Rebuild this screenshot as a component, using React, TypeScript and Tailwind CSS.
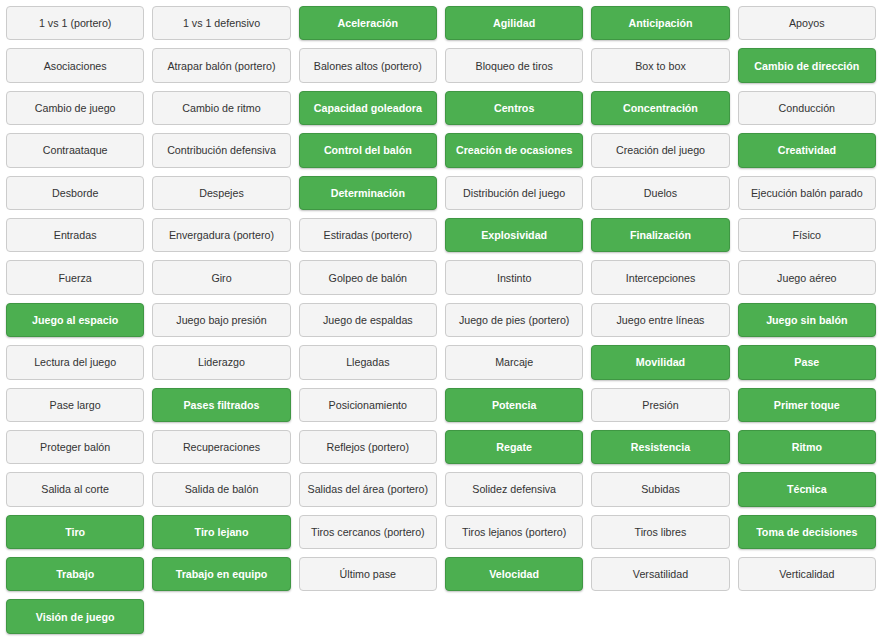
const skills: [string, boolean][] = [
  ['1 vs 1 (portero)', false], ['1 vs 1 defensivo', false], ['Aceleración', true], ['Agilidad', true], ['Anticipación', true], ['Apoyos', false],
  ['Asociaciones', false], ['Atrapar balón (portero)', false], ['Balones altos (portero)', false], ['Bloqueo de tiros', false], ['Box to box', false], ['Cambio de dirección', true],
  ['Cambio de juego', false], ['Cambio de ritmo', false], ['Capacidad goleadora', true], ['Centros', true], ['Concentración', true], ['Conducción', false],
  ['Contraataque', false], ['Contribución defensiva', false], ['Control del balón', true], ['Creación de ocasiones', true], ['Creación del juego', false], ['Creatividad', true],
  ['Desborde', false], ['Despejes', false], ['Determinación', true], ['Distribución del juego', false], ['Duelos', false], ['Ejecución balón parado', false],
  ['Entradas', false], ['Envergadura (portero)', false], ['Estiradas (portero)', false], ['Explosividad', true], ['Finalización', true], ['Físico', false],
  ['Fuerza', false], ['Giro', false], ['Golpeo de balón', false], ['Instinto', false], ['Intercepciones', false], ['Juego aéreo', false],
  ['Juego al espacio', true], ['Juego bajo presión', false], ['Juego de espaldas', false], ['Juego de pies (portero)', false], ['Juego entre líneas', false], ['Juego sin balón', true],
  ['Lectura del juego', false], ['Liderazgo', false], ['Llegadas', false], ['Marcaje', false], ['Movilidad', true], ['Pase', true],
  ['Pase largo', false], ['Pases filtrados', true], ['Posicionamiento', false], ['Potencia', true], ['Presión', false], ['Primer toque', true],
  ['Proteger balón', false], ['Recuperaciones', false], ['Reflejos (portero)', false], ['Regate', true], ['Resistencia', true], ['Ritmo', true],
  ['Salida al corte', false], ['Salida de balón', false], ['Salidas del área (portero)', false], ['Solidez defensiva', false], ['Subidas', false], ['Técnica', true],
  ['Tiro', true], ['Tiro lejano', true], ['Tiros cercanos (portero)', false], ['Tiros lejanos (portero)', false], ['Tiros libres', false], ['Toma de decisiones', true],
  ['Trabajo', true], ['Trabajo en equipo', true], ['Último pase', false], ['Velocidad', true], ['Versatilidad', false], ['Verticalidad', false],
  ['Visión de juego', true],
];

export default function App() {
  return (
    <div className="min-h-[640px] bg-white p-1.5 font-['Liberation_Sans',Arial,sans-serif]">
      <div className="grid grid-cols-6 gap-x-2 gap-y-[8px]">
        {skills.map(([name, on]) => (
          <button
            key={name}
            className={
              on
                ? 'h-[34.4px] rounded border border-[#3f9743] bg-[#4caf50] text-[10.7px] font-bold text-white shadow-[0_1px_2px_rgba(0,0,0,0.25)]'
                : 'h-[34.4px] rounded border border-[#cccccc] bg-[#f4f4f4] text-[10.7px] text-[#333]'
            }
          >
            {name}
          </button>
        ))}
      </div>
    </div>
  );
}
